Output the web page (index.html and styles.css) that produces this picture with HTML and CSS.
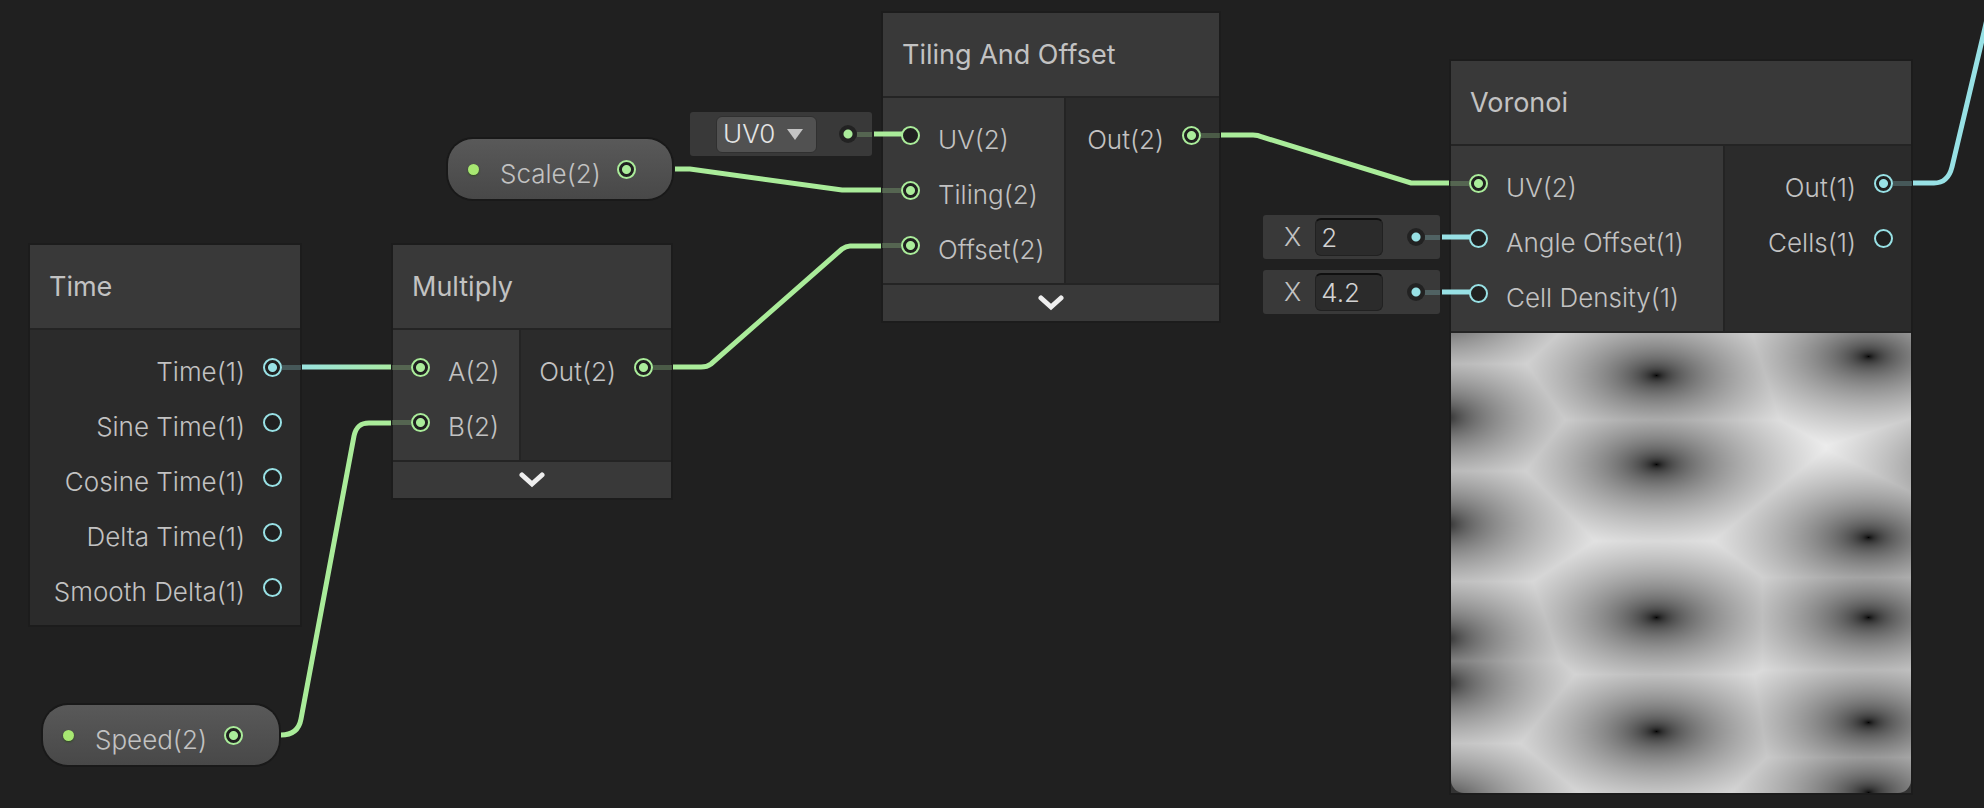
FILE: index.html
```html
<!DOCTYPE html>
<html lang="en">
<head>
    <meta charset="UTF-8">
    <meta name="viewport" content="width=device-width, initial-scale=1.0">
    <title>Shader Graph</title>
    <link rel="stylesheet" href="styles.css">
</head>
<body>
    <main class="graph">
        <!-- Edges outside the nodes -->
        <svg class="edges" aria-hidden="true">
            <defs>
                <linearGradient id="floatToVector" gradientUnits="userSpaceOnUse" x1="302" y1="0" x2="391" y2="0">
                    <stop offset="0" stop-color="#9ae3df"/>
                    <stop offset="1" stop-color="#a9eba4"/>
                </linearGradient>
            </defs>
            <path class="edge" stroke="url(#floatToVector)" d="M302 367H391"/>
            <path class="edge vector" d="M281 735C292 735 299 730 301 719L354 436C356 427 360 423 369 423H391"/>
            <path class="edge vector" d="M673 367H701Q707 367 711 364L842 249Q846 246 850 246H881"/>
            <path class="edge vector" d="M675 169H690L842 190H881"/>
            <path class="edge vector" d="M1221 135H1253Q1258 135 1262 137L1411 183H1449"/>
            <path class="edge float" d="M1913 183H1934Q1948 183 1952 167L1984 32L1992 -2"/>
        </svg>

        <section class="node time">
            <h2 class="node-title">Time</h2>
            <div class="node-body">
                <ul class="ports outputs">
                    <li class="port-row">Time(1)<span class="port float connected"></span></li>
                    <li class="port-row">Sine Time(1)<span class="port float"></span></li>
                    <li class="port-row">Cosine Time(1)<span class="port float"></span></li>
                    <li class="port-row">Delta Time(1)<span class="port float"></span></li>
                    <li class="port-row">Smooth Delta(1)<span class="port float"></span></li>
                </ul>
            </div>
        </section>

        <section class="node multiply">
            <h2 class="node-title">Multiply</h2>
            <div class="node-body">
                <ul class="ports inputs">
                    <li class="port-row"><span class="port vector connected"></span>A(2)</li>
                    <li class="port-row"><span class="port vector connected"></span>B(2)</li>
                </ul>
                <ul class="ports outputs">
                    <li class="port-row">Out(2)<span class="port vector connected"></span></li>
                </ul>
            </div>
            <button class="expand" type="button" aria-label="Show preview">
                <svg width="26" height="16" viewBox="0 0 26 16"><path d="M3 3L13 12L23 3"/></svg>
            </button>
        </section>

        <section class="node tiling">
            <h2 class="node-title">Tiling And Offset</h2>
            <div class="node-body">
                <ul class="ports inputs">
                    <li class="port-row"><span class="port vector"></span>UV(2)</li>
                    <li class="port-row"><span class="port vector connected"></span>Tiling(2)</li>
                    <li class="port-row"><span class="port vector connected"></span>Offset(2)</li>
                </ul>
                <ul class="ports outputs">
                    <li class="port-row">Out(2)<span class="port vector connected"></span></li>
                </ul>
            </div>
            <button class="expand" type="button" aria-label="Show preview">
                <svg width="26" height="16" viewBox="0 0 26 16"><path d="M3 3L13 12L23 3"/></svg>
            </button>
        </section>

        <section class="node voronoi">
            <h2 class="node-title">Voronoi</h2>
            <div class="node-body">
                <ul class="ports inputs">
                    <li class="port-row"><span class="port vector connected"></span>UV(2)</li>
                    <li class="port-row"><span class="port float"></span>Angle Offset(1)</li>
                    <li class="port-row"><span class="port float"></span>Cell Density(1)</li>
                </ul>
                <ul class="ports outputs">
                    <li class="port-row">Out(1)<span class="port float connected"></span></li>
                    <li class="port-row">Cells(1)<span class="port float"></span></li>
                </ul>
            </div>
            <div class="preview">
                <canvas id="preview" width="460" height="460"></canvas>
            </div>
        </section>

        <!-- Blackboard properties -->
        <div class="property scale">
            <span class="dot"></span>
            <span class="property-name">Scale(2)</span>
            <span class="port vector connected"></span>
        </div>
        <div class="property speed">
            <span class="dot"></span>
            <span class="property-name">Speed(2)</span>
            <span class="port vector connected"></span>
        </div>

        <!-- Default values of unconnected inputs -->
        <div class="slot slot-uv">
            <div class="channel">
                <select aria-label="UV channel">
                    <option>UV0</option>
                    <option>UV1</option>
                    <option>UV2</option>
                    <option>UV3</option>
                </select>
                <svg width="16" height="11" viewBox="0 0 16 11"><path d="M0 0H16L8 11Z"/></svg>
            </div>
            <span class="slot-port vector"></span>
        </div>
        <div class="slot slot-angle">
            <label for="angleOffset">X</label>
            <input type="text" id="angleOffset" value="2">
            <span class="slot-port float"></span>
        </div>
        <div class="slot slot-density">
            <label for="cellDensity">X</label>
            <input type="text" id="cellDensity" value="4.2">
            <span class="slot-port float"></span>
        </div>

        <!-- Slot edges run over the node border up to the port -->
        <svg class="edges" aria-hidden="true">
            <path class="edge vector" d="M874 134H902"/>
            <path class="edge float" d="M1442 237H1470M1442 292H1470"/>
        </svg>
    </main>

    <script src="preview.js"></script>
</body>
</html>
```
FILE: styles.css
```css
* {
    margin: 0;
    padding: 0;
    box-sizing: border-box;
}

body {
    font-family: Inter, 'Liberation Sans', sans-serif;
    font-size: 26px;
    font-weight: 350;
    line-height: 32px;
    color: #c2c2c2;
    background: #202020;
}

.graph {
    position: relative;
    min-height: 100vh;
    overflow: hidden;
}

.edges {
    position: absolute;
    inset: 0;
    width: 100%;
    height: 100%;
    pointer-events: none;
}

.edge {
    fill: none;
    stroke-width: 5px;
}

.vector {
    --type: #aaec9a;
    --dim: #aaec9a40;
}

.float {
    --type: #98e1e5;
    --dim: #98e1e540;
}

.edge.vector,
.edge.float {
    stroke: var(--type);
}

/* Nodes */
.node {
    position: absolute;
    background: #242424;
    box-shadow: 0 0 0 2px #1c1c1c;
}

.time {
    left: 30px;
    top: 245px;
    width: 270px;
}

.multiply {
    left: 393px;
    top: 245px;
    width: 278px;
}

.tiling {
    left: 883px;
    top: 13px;
    width: 336px;
}

.voronoi {
    left: 1451px;
    top: 61px;
    width: 460px;
}

.node-title {
    padding: 26px 19px 25px;
    font-size: 27px;
    font-weight: 400;
    line-height: 32px;
    background: #393939;
}

.node-body {
    display: flex;
    gap: 2px;
    margin-top: 2px;
}

.ports {
    padding: 10px 18px;
    list-style: none;
}

.inputs {
    padding-right: 19px;
    background: #393939;
}

.voronoi .inputs {
    width: 272px;
}

.outputs {
    flex: 1;
    padding-left: 0;
    background: #2b2b2b;
}

.port-row {
    display: flex;
    align-items: center;
    gap: 18px;
    height: 55px;
    padding-top: 9px;
    white-space: nowrap;
}

.outputs .port-row {
    justify-content: flex-end;
}

.port {
    position: relative;
    flex: none;
    width: 19px;
    height: 19px;
    margin-top: -9px;
    border: 2px solid var(--type);
    border-radius: 50%;
    background: #202020;
}

.port.connected {
    background: radial-gradient(circle, var(--type) 4px, #202020 5px);
}

/* Edge stub drawn over the node */
.ports .connected::after {
    content: '';
    position: absolute;
    top: 5px;
    width: 19px;
    height: 5px;
    background: var(--dim);
}

.inputs .connected::after {
    right: 17px;
}

.outputs .connected::after {
    left: 17px;
}

.expand {
    display: flex;
    align-items: center;
    justify-content: center;
    width: 100%;
    height: 36px;
    margin-top: 2px;
    border: none;
    background: #393939;
    cursor: pointer;
}

.expand path {
    fill: none;
    stroke: #eee;
    stroke-width: 5px;
    stroke-linecap: round;
}

.preview {
    margin-top: 2px;
    background: #343434;
}

.preview canvas {
    display: block;
    width: 100%;
    border-radius: 0 0 13px 13px;
}

/* Properties */
.property {
    position: absolute;
    display: flex;
    align-items: center;
    height: 60px;
    padding: 0 36px 0 20px;
    border-radius: 25px;
    background: linear-gradient(#595959, #484848);
    box-shadow: 0 0 0 2px #191919;
}

.scale {
    left: 448px;
    top: 139px;
    width: 224px;
}

.speed {
    left: 43px;
    top: 705px;
    width: 236px;
}

.dot {
    width: 11px;
    height: 11px;
    border-radius: 50%;
    background: #a8e872;
    box-shadow: 0 1px 2px #2f4a20;
}

.property-name {
    flex: 1;
    padding: 10px 0 0 21px;
}

.property .port {
    margin-top: 0;
}

/* Slots */
.slot {
    position: absolute;
    display: flex;
    align-items: center;
    height: 44px;
    padding-right: 15px;
    border-radius: 3px;
    background: #393939;
}

.slot-uv {
    left: 690px;
    top: 112px;
    width: 182px;
    padding-left: 26px;
}

.slot-angle,
.slot-density {
    left: 1263px;
    width: 177px;
    padding-left: 21px;
}

.slot-angle {
    top: 215px;
}

.slot-density {
    top: 270px;
}

.slot input {
    width: 68px;
    height: 38px;
    margin-left: 14px;
    padding: 0 5px;
    border: 1px solid #212121;
    border-top: 2px solid #0f0f0f;
    border-radius: 6px;
    font: inherit;
    color: #d2d2d2;
    background: #2b2b2b;
    outline: none;
}

.channel {
    position: relative;
}

.channel select {
    display: block;
    width: 101px;
    height: 37px;
    padding: 0 6px;
    border: 1px solid #303030;
    border-radius: 6px;
    font: inherit;
    color: #e4e4e4;
    background: #515151;
    appearance: none;
}

.channel svg {
    position: absolute;
    right: 14px;
    top: 13px;
    fill: #c4c4c4;
    pointer-events: none;
}

.slot-port {
    position: relative;
    width: 18px;
    height: 18px;
    margin-left: auto;
    border-radius: 50%;
    background: radial-gradient(circle, var(--type) 4px, #222 5px);
}

.slot-port::after {
    content: '';
    position: absolute;
    left: 18px;
    top: 7px;
    width: 15px;
    height: 5px;
    background: var(--dim);
}
```
FILE: preview.js
```js
const canvas = document.getElementById('preview');
const ctx = canvas.getContext('2d');
const size = canvas.width;

// Feature points of the cells, including those just outside the preview
const points = [
    [-10, -23], [-10, 84], [-10, 191], [-10, 305], [-10, 350], [-10, 470],
    [205, 42], [205, 131], [205, 284], [205, 398],
    [417, 23], [417, 204], [417, 284], [417, 389], [417, 459],
    [543, 134]
];
const stretch = 0.53;
const cell = size / 4.2;

function toSrgb(v) {
    return v <= 0.0031308 ? v * 12.92 : 1.055 * Math.pow(v, 1 / 2.4) - 0.055;
}

const image = ctx.createImageData(size, size);
for (let y = 0; y < size; y++) {
    for (let x = 0; x < size; x++) {
        let nearest = Infinity;
        for (const [px, py] of points) {
            nearest = Math.min(nearest, Math.hypot((x - px) * stretch, y - py));
        }
        const shade = Math.round(toSrgb(Math.min(nearest / cell, 1)) * 255);
        const i = (y * size + x) * 4;
        image.data[i] = image.data[i + 1] = image.data[i + 2] = shade;
        image.data[i + 3] = 255;
    }
}
ctx.putImageData(image, 0, 0);
```
